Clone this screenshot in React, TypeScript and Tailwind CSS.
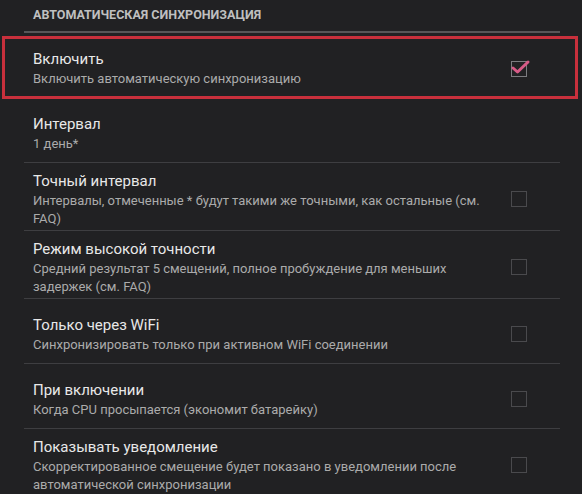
import React from "react";

interface Pref {
  id: string;
  title: string;
  summary: string;
  checkbox: boolean;
  checked?: boolean;
}

const prefs: Pref[] = [
  {
    id: "interval",
    title: "Интервал",
    summary: "1 день*",
    checkbox: false,
  },
  {
    id: "exact",
    title: "Точный интервал",
    summary:
      "Интервалы, отмеченные * будут такими же точными, как остальные (см. FAQ)",
    checkbox: true,
  },
  {
    id: "precise",
    title: "Режим высокой точности",
    summary:
      "Средний результат 5 смещений, полное пробуждение для меньших задержек (см. FAQ)",
    checkbox: true,
  },
  {
    id: "wifi",
    title: "Только через WiFi",
    summary: "Синхронизировать только при активном WiFi соединении",
    checkbox: true,
  },
  {
    id: "boot",
    title: "При включении",
    summary: "Когда CPU просыпается (экономит батарейку)",
    checkbox: true,
  },
  {
    id: "notify",
    title: "Показывать уведомление",
    summary:
      "Скорректированное смещение будет показано в уведомлении после автоматической синхронизации",
    checkbox: true,
  },
];

const CheckBox = ({ checked }: { checked?: boolean }) => (
  <div className="relative w-[16px] h-[16px]">
    <div
      className={`absolute inset-0 border-[1.5px] ${
        checked ? "border-[#7c7c80]" : "border-[#4a4a4d]"
      }`}
    />
    {checked && (
      <svg
        className="absolute -left-[1px] -top-[9px]"
        width="22"
        height="24"
        viewBox="0 0 22 24"
      >
        <path
          d="M3 16 L7.5 20 L18 10"
          fill="none"
          stroke="#d65a86"
          strokeWidth="3"
          strokeLinecap="round"
          strokeLinejoin="round"
        />
      </svg>
    )}
  </div>
);

const PrefText = ({ title, summary }: { title: string; summary: string }) => (
  <div>
    <div className="text-[15px] leading-[22px] text-[#e8e8e8]">{title}</div>
    <div className="text-[13px] leading-[18px] text-[#ababab]">{summary}</div>
  </div>
);

export default function App() {
  return (
    <div
      className="w-[582px] h-[494px] overflow-hidden bg-[#212123] pl-[24px] pr-[22px]"
      style={{ fontFamily: "Roboto, 'Noto Sans', sans-serif" }}
    >
      <div className="h-[33px] border-b-2 border-[#565658] pl-[9px] flex items-center">
        <span className="text-[12.5px] font-bold uppercase text-[#bfbfbf]">
          Автоматическая синхронизация
        </span>
      </div>

      <div className="mt-[3px] -ml-[22px] -mr-[18px] h-[63px] border-[3px] border-[#c8303c] flex items-center pl-[28px]">
        <div className="flex-1 min-w-0 pr-[21px]">
          <PrefText
            title="Включить"
            summary="Включить автоматическую синхронизацию"
          />
        </div>
        <div className="mr-[48px] mt-[2px]">
          <CheckBox checked />
        </div>
      </div>

      {prefs.map((p, i) => (
        <div
          key={p.id}
          className={`flex items-center pl-[9px] pt-[7px] pb-[2px] ${
            i === 0 ? "min-h-[64px]" : "min-h-[65px]"
          } ${i < prefs.length - 1 ? "border-b border-[#3e3e41]" : ""}`}
        >
          <div className="flex-1 min-w-0 pr-[21px]">
            <PrefText title={p.title} summary={p.summary} />
          </div>
          <div className="w-[16px] mr-[33px]">
            {p.checkbox && <CheckBox checked={p.checked} />}
          </div>
        </div>
      ))}
    </div>
  );
}
